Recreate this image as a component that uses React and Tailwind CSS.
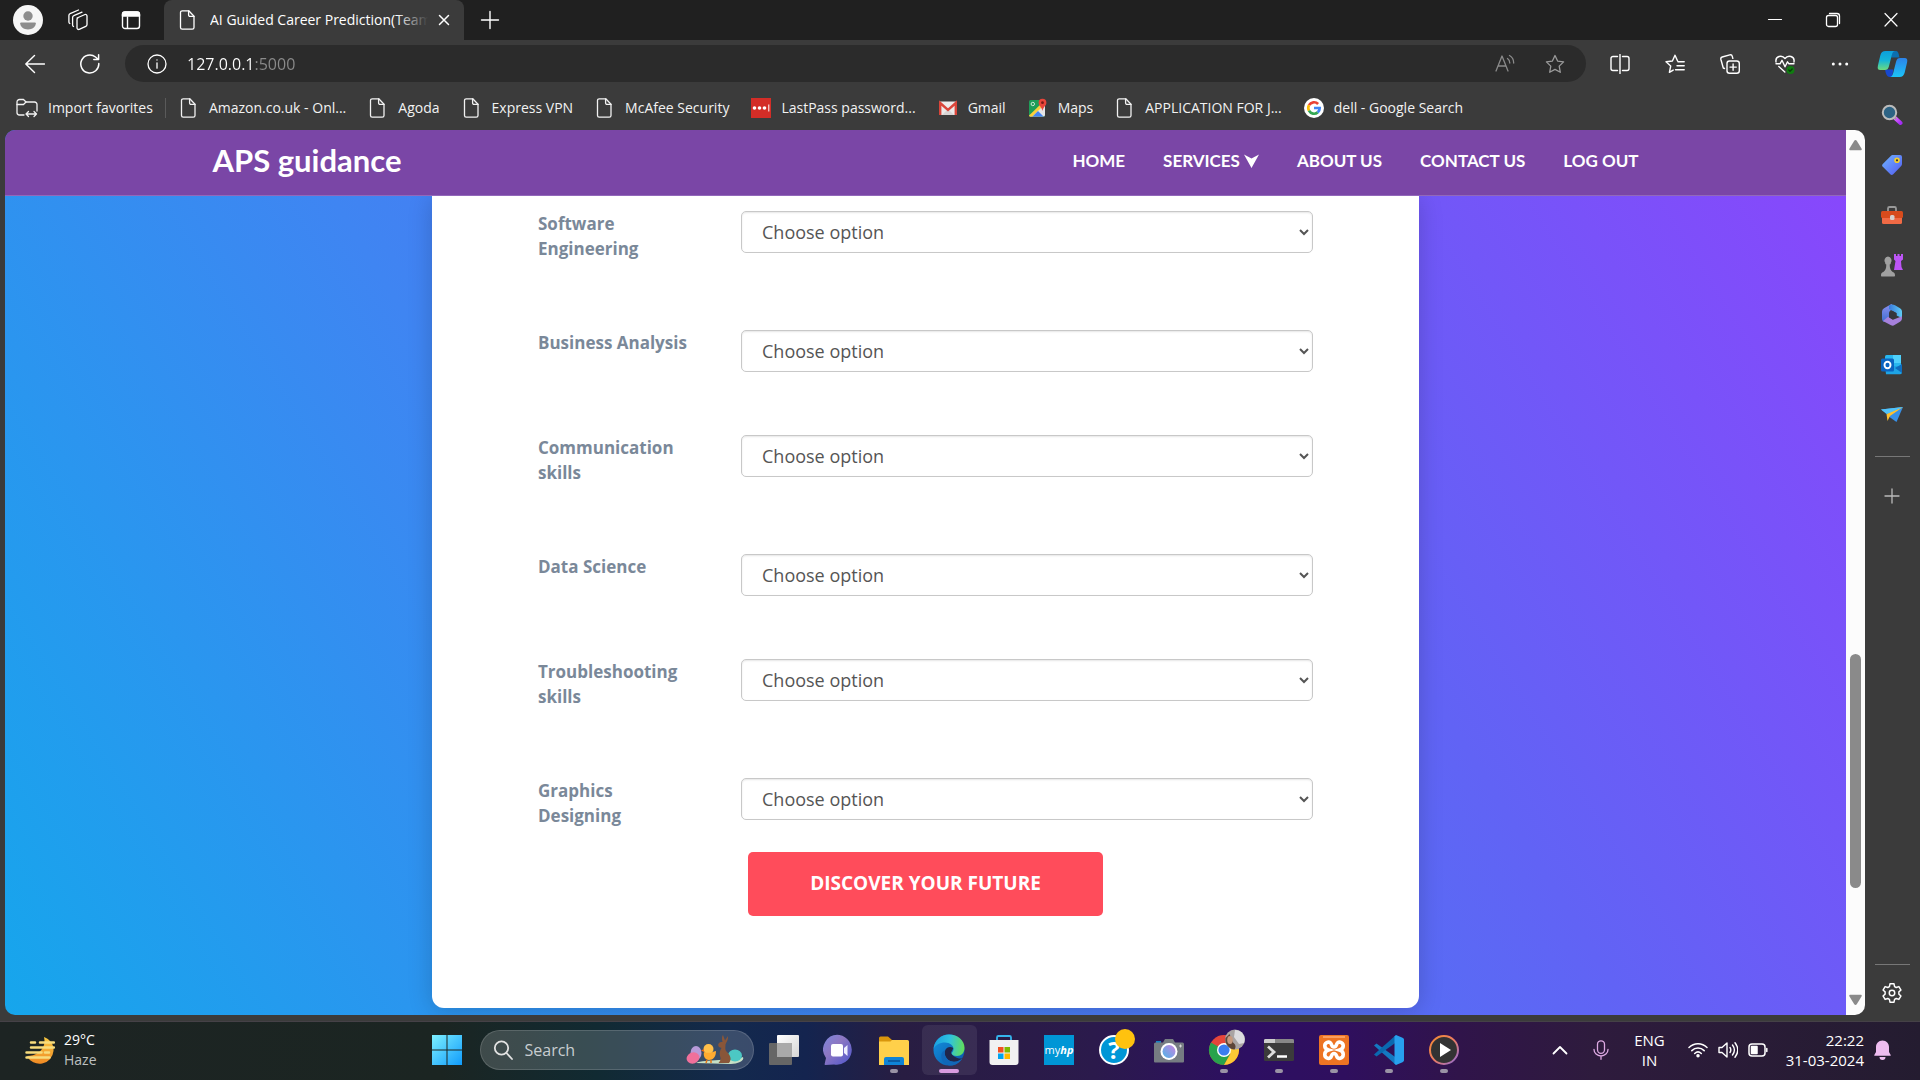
import React from "react";

const line = { fill: "none", stroke: "currentColor", strokeLinecap: "round", strokeLinejoin: "round" };

function Svg({ box = "0 0 20 20", className = "size-5", children, ...rest }) {
  return (
    <svg viewBox={box} className={`shrink-0 ${className}`} aria-hidden="true" {...rest}>
      {children}
    </svg>
  );
}

const PageIcon = () => (
  <Svg {...line} strokeWidth="1.3">
    <path d="M4 .8h6.8l5.2 5.4v11.3a1.7 1.7 0 0 1-1.7 1.7H4.2a1.7 1.7 0 0 1-1.7-1.7V2.5A1.7 1.7 0 0 1 4.2.8" />
    <path d="M10.6 1v4a1.4 1.4 0 0 0 1.4 1.4h4" />
  </Svg>
);

const ImportIcon = () => (
  <Svg box="0 0 22 20" className="h-5 w-[22px]" {...line} strokeWidth="1.3">
    <path d="M8 17H3.5A2.500 2.500 0 0 1 1 14.500V4a2.500 2.500 0 0 1 2.500-2.500h4L10 4h8.500A2.500 2.500 0 0 1 21 6.500V13" />
    <path d="M1 6.500h6.500L10 4M10 16h10.500M12.500 13.500 10 16l2.500 2.500M18 13.500l2.500 2.500-2.500 2.500" />
  </Svg>
);

const LastPassIcon = () => (
  <Svg>
    <rect width="20" height="20" fill="#d32d27" />
    <circle cx="3.500" cy="10" r="1.800" fill="#fff" />
    <circle cx="8.500" cy="10" r="1.800" fill="#fff" />
    <circle cx="13.500" cy="10" r="1.800" fill="#fff" />
    <path d="M17.800 6.500v7" stroke="#fff" strokeWidth="1" />
  </Svg>
);

const GmailIcon = () => (
  <Svg>
    <rect x="1" y="3.500" width="18" height="13.500" rx="1.500" fill="#eceaea" />
    <path d="M4 17 10 11l6 6z" fill="#d8d4d4" />
    <path d="M2.200 17V5l7.800 6.800L17.800 5v12" fill="none" stroke="#d9453a" strokeWidth="2.400" />
  </Svg>
);

const MapsIcon = () => (
  <Svg>
    <rect x="1" y="2" width="16" height="16.500" rx="1.500" fill="#1f9d58" />
    <path d="M1.500 18.500 17 4v13a1.500 1.500 0 0 1-1.500 1.500z" fill="#e6e6e6" />
    <path d="M1 17.500 14 5l2 2L4.500 18.500H2A1 1 0 0 1 1 17.500" fill="#fbd03b" />
    <path d="m4.500 18.500 5.500-5.500 5.500 5.500z" fill="#4384f3" />
    <circle cx="4.800" cy="6" r="1.700" fill="none" stroke="#cfe8d8" strokeWidth="1" />
    <path d="M14.500.800a3.900 3.900 0 0 1 3.900 3.900c0 2.900-3 3.800-3.900 8.300-.9-4.500-3.900-5.400-3.900-8.300A3.900 3.900 0 0 1 14.500.800" fill="#e8453a" />
    <circle cx="14.500" cy="4.700" r="1.400" fill="#7c1b17" />
  </Svg>
);

const GoogleIcon = () => (
  <Svg>
    <circle cx="10" cy="10" r="10" fill="#fff" />
    <g fill="none" strokeWidth="2.700">
      <path d="M5 7.200A5.700 5.700 0 0 1 14.100 6" stroke="#ea4335" />
      <path d="M5 12.700A5.700 5.700 0 0 1 5 7.200" stroke="#fbbc05" />
      <path d="M13.700 14.400A5.700 5.700 0 0 1 5 12.700" stroke="#34a853" />
      <path d="M10 10h5.700a5.700 5.700 0 0 1-2 4.400" stroke="#4285f4" />
    </g>
  </Svg>
);

const bookmarks = [
  ["Amazon.co.uk - Onl...", PageIcon],
  ["Agoda", PageIcon],
  ["Express VPN", PageIcon],
  ["McAfee Security", PageIcon],
  ["LastPass password...", LastPassIcon],
  ["Gmail", GmailIcon],
  ["Maps", MapsIcon],
  ["APPLICATION FOR J...", PageIcon],
  ["dell - Google Search", GoogleIcon],
];

function TabStrip() {
  return (
    <div className="flex h-10 items-stretch bg-[#202020] text-white">
      <div className="flex w-[164px] shrink-0 items-center gap-6 pl-[13px]">
        <button aria-label="Profile" className="size-[30px]">
          <Svg box="0 0 30 30" className="size-[30px]">
            <circle cx="15" cy="15" r="15" fill="#f6f6f6" />
            <circle cx="15" cy="11" r="4.700" fill="#8d8d8d" />
            <path d="M8 17.500h14c.5 0 .8.300.8.800 0 3.700-3.500 6.200-7.800 6.200s-7.800-2.500-7.800-6.200c0-.5.300-.8.800-.8" fill="#8d8d8d" />
          </Svg>
        </button>
        <button aria-label="Workspaces" className="mr-2">
          <Svg box="0 0 22 22" className="size-[22px]" {...line} strokeWidth="1.300">
            <path d="m10 9 8-3.500a1.500 1.500 0 0 1 2 1.400v8.600a2 2 0 0 1-1.200 1.800l-6.600 3a1.500 1.500 0 0 1-2.200-1.400v-8.500A1.600 1.600 0 0 1 10.900 9z" />
            <path d="M6.500 17.500a1.500 1.500 0 0 1-.9-1.400V8.500c0-.8.400-1.500 1.200-1.800L15 3.200M2.800 14.500a1.500 1.500 0 0 1-.9-1.400V6.500c0-.8.400-1.500 1.200-1.800L11.500 1" />
          </Svg>
        </button>
        <button aria-label="Tab actions">
          <Svg box="0 0 20 20" className="size-5" {...line} strokeWidth="1.400">
            <rect x="1.500" y="2" width="17" height="16.500" rx="2.500" />
            <path d="M1.500 6V4.500A2.500 2.500 0 0 1 4 2h12a2.500 2.500 0 0 1 2.500 2.500V6z" fill="currentColor" />
            <path d="M6.500 7v11" />
          </Svg>
        </button>
      </div>
      <div className="flex w-[300px] items-center rounded-t-lg bg-[#3b3b3b] pl-[14px] pr-3">
        <PageIcon />
        <span className="relative ml-3 min-w-0 flex-1 overflow-hidden whitespace-nowrap text-sm after:absolute after:inset-y-0 after:right-0 after:w-8 after:bg-linear-to-r after:from-transparent after:to-[#3b3b3b]">
          AI Guided Career Prediction(Team
        </span>
        <button aria-label="Close tab" className="ml-2">
          <Svg box="0 0 16 16" className="size-4" {...line} strokeWidth="1.500"><path d="m3.500 3.500 9 9m0-9-9 9" /></Svg>
        </button>
      </div>
      <button aria-label="New tab" className="ml-4">
        <Svg {...line} strokeWidth="1.400"><path d="M10 1.500v17M1.500 10h17" /></Svg>
      </button>
      <div className="ml-auto flex items-stretch">
        <button aria-label="Minimize" className="flex w-[58px] items-center justify-center"><Svg box="0 0 16 16" className="size-4" {...line} strokeWidth="1.200"><path d="M1.500 7.500h13" /></Svg></button>
        <button aria-label="Restore" className="flex w-[58px] items-center justify-center">
          <Svg box="0 0 16 16" className="size-4" {...line} strokeWidth="1.300">
            <rect x="1.500" y="3.500" width="11" height="11" rx="2" />
            <path d="M4.500 1.500h7.500a2.500 2.500 0 0 1 2.500 2.500v7.500" />
          </Svg>
        </button>
        <button aria-label="Close" className="flex w-[58px] items-center justify-center"><Svg box="0 0 16 16" className="size-4" {...line} strokeWidth="1.200"><path d="m2 1.500 12 12.500M14 1.500 2 14" /></Svg></button>
      </div>
    </div>
  );
}

const CopilotIcon = () => (
  <Svg box="0 0 32 30" className="h-[28px] w-[31px]">
    <defs>
      <linearGradient id="cpA" x1="0" y1="0" x2="0" y2="1"><stop stopColor="#0c9fdc" /><stop offset=".5" stopColor="#15b5d8" /><stop offset="1" stopColor="#6edb7c" /></linearGradient>
      <linearGradient id="cpB" x1="0" y1="0" x2="0" y2="1"><stop stopColor="#2c82e8" /><stop offset="1" stopColor="#1cc4f8" /></linearGradient>
    </defs>
    <path d="M15 1h4c3 0 3.500 2 4.500 7l-9 0z" fill="#0c6fae" />
    <path d="M8 21h9l-1.500 8H13c-3 0-4-3-5-8" fill="#1748cf" />
    <path d="M8.500 1H19c-2 0-3 1.500-3.800 4.500l-3 12c-.8 3-2 4-4.400 4H3c-2.700 0-3.300-2-2.600-5L3 5.500C3.900 2.500 5.500 1 8.500 1" fill="url(#cpA)" />
    <path d="M23.500 29H13c2 0 3-1.500 3.800-4.500l3-12c.8-3 2-4 4.400-4H29c2.700 0 3.300 2 2.600 5L29 24.500c-.9 3-2.500 4.500-5.500 4.500" fill="url(#cpB)" />
  </Svg>
);

const STAR = "m10 1.500 2.600 5.600 6 .8-4.400 4.200 1.100 6.200L10 15.400l-5.300 2.900 1.100-6.200L1.400 7.900l6-.8z";

function Toolbar() {
  return (
    <div className="flex h-[47px] items-center text-white">
      <button aria-label="Back" className="ml-[25px]"><Svg {...line} strokeWidth="1.400"><path d="M19.500 10H.800M9.500 1.500.800 10l8.700 8.500" /></Svg></button>
      <button aria-label="Refresh" className="ml-[35px]"><Svg {...line} strokeWidth="1.500"><path d="M18.800 9.500A9 9 0 1 1 15.500 3L18.500 5.500M18.600.800v4.800h-4.800" /></Svg></button>
      <div className="ml-[25px] flex h-[37px] flex-1 items-center rounded-full bg-[#2b2b2b] pl-[22px] pr-[21px]">
        <button aria-label="Site information"><Svg {...line} strokeWidth="1.300"><circle cx="10" cy="10" r="9" /><path d="M10 8.800v5.400M10 5.800v.2" /></Svg></button>
        <input aria-label="Address" defaultValue="127.0.0.1:5000" className="ml-5 min-w-0 flex-1 bg-[linear-gradient(90deg,#ffffff_66px,#8b8b8b_66px)] bg-clip-text text-base text-transparent outline-none" />
        <button aria-label="Read aloud" className="text-[#8b8b8b]"><Svg {...line} strokeWidth="1.300"><path d="m1 17 6-15 6 15M3 12h8M12.500 4.500c1.500 1 2.300 2.500 2.300 4.500M14.500 1.500c2.700 1.500 4.200 4 4.200 7.500" /></Svg></button>
        <button aria-label="Add favorite" className="ml-[30px] text-[#9a9a9a]"><Svg {...line} strokeWidth="1.300"><path d={STAR} /></Svg></button>
      </div>
      <div className="ml-[24px] flex items-center gap-[35px]">
        <button aria-label="Split screen"><Svg {...line} strokeWidth="1.400"><path d="M10 .500v19M7.500 2.500H3A2 2 0 0 0 1 4.500v10a2 2 0 0 0 2 2h4.500M12.500 2.500H17a2 2 0 0 1 2 2v10a2 2 0 0 1-2 2h-4.500" /></Svg></button>
        <button aria-label="Favorites"><Svg {...line} strokeWidth="1.400"><path d="M12.600 7 10 1.200 7.400 7l-6.400.700 4.700 4.300-1.300 6.300 3.800-2.200M13 7.700h6.200M12 11.800h7.200M10.500 15.800h8.700" /></Svg></button>
        <button aria-label="Collections"><Svg {...line} strokeWidth="1.400"><rect x="7" y="7" width="12.300" height="12.300" rx="2.500" /><path d="M13.100 10v6.300M10 13.100h6.300M4.500 14.500l-1.200-.5L.900 5.500c-.3-1.200.2-2.200 1.300-2.500L9.800.900C11 .6 12 1.100 12.300 2.300l.5 2" /></Svg></button>
        <button aria-label="Browser essentials"><Svg {...line} strokeWidth="1.400"><path d="M1 8C0 2 7 .500 10 4.500c3-4 10-2.500 9 3.500M1 9.800h4l2-3.500 3 6.500 2.500-5 1.500 2h5M3.800 12.500 9.800 18" /><circle cx="15.500" cy="16" r="4" fill="#107c10" stroke="none" /><path d="m13.800 16 1.200 1.200 2.200-2.200" stroke="#0a3d0a" /></Svg></button>
        <button aria-label="Settings and more"><Svg fill="currentColor"><circle cx="3.300" cy="10" r="1.500" /><circle cx="10" cy="10" r="1.500" /><circle cx="16.700" cy="10" r="1.500" /></Svg></button>
      </div>
      <button aria-label="Copilot" className="ml-[27px] mr-3"><CopilotIcon /></button>
    </div>
  );
}

function Bookmarks() {
  return (
    <nav aria-label="Favorites bar" className="flex h-[43px] items-center pb-0.5 pl-4 text-sm text-[#f2f2f2]">
      <button className="flex items-center gap-2.5"><ImportIcon />Import favorites</button>
      <span className="ml-3 h-5 w-px bg-[#5a5a5a]" />
      <div className="ml-[13px] flex items-center gap-[22px]">
        {bookmarks.map(([name, Icon]) => (
          <a key={name} href="#" className="flex items-center gap-2.5 whitespace-nowrap"><Icon />{name}</a>
        ))}
      </div>
    </nav>
  );
}

function Scrollbar() {
  return (
    <div className="flex w-[19px] shrink-0 flex-col items-center bg-[#fcfcfc] py-2.5 text-[#8a8a8a]">
      <Svg box="0 0 13 11" className="h-[11px] w-[13px]" fill="currentColor"><path d="M6.500 0c.6 0 1 .3 1.400.9l4.600 7.500c.6 1.100.2 1.900-1 1.900h-10c-1.200 0-1.600-.8-1-1.900L5.100.9C5.500.3 5.900 0 6.500 0" /></Svg>
      <div className="flex-[503]" />
      <div className="w-[11px] flex-[234] rounded-full bg-[#8a8a8a]" />
      <div className="flex-[106]" />
      <Svg box="0 0 13 11" className="h-[11px] w-[13px] rotate-180" fill="currentColor"><path d="M6.500 0c.6 0 1 .3 1.400.9l4.600 7.500c.6 1.100.2 1.900-1 1.900h-10c-1.200 0-1.600-.8-1-1.900L5.100.9C5.500.3 5.900 0 6.500 0" /></Svg>
    </div>
  );
}

const skills = ["Software Engineering", "Business Analysis", "Communication skills", "Data Science", "Troubleshooting skills", "Graphics Designing"];

function SitePage() {
  return (
    <div className="flex min-w-0 flex-1 flex-col bg-[linear-gradient(58deg,#16a6ec_0%,#3f85f2_35%,#6163f5_68%,#8a46fc_100%)]">
      <header className="relative border-b border-[#9268ba] bg-[#7a46a6] font-['Lato',sans-serif] font-bold text-white">
        <div className="mx-auto flex h-[65px] w-full max-w-[1426px] items-center justify-between pb-1">
          <a href="#" className="text-[31px]">APS guidance</a>
          <nav className="flex items-center gap-[38px] text-[17px]">
            <a href="#">HOME</a>
            <a href="#" className="flex items-center gap-1">SERVICES
              <Svg box="0 0 15 14" className="h-3.5 w-[15px]" fill="currentColor"><path d="M0 .500 7.500 4.500 15 .500 7.500 14z" /></Svg>
            </a>
            <a href="#">ABOUT US</a>
            <a href="#">CONTACT US</a>
            <a href="#">LOG OUT</a>
          </nav>
        </div>
      </header>
      <main className="mx-auto mb-[7px] w-full max-w-[987px] flex-1 rounded-b-xl bg-white px-[106px] pb-[91px] pt-[15px] font-['Open_Sans',sans-serif] text-lg shadow-[0_3px_25px_rgba(0,0,0,0.18)]">
        <form onSubmit={(e) => e.preventDefault()}>
          <div className="flex flex-col gap-[63px]">
            {skills.map((skill, i) => (
              <div key={skill} className="flex items-start">
                <div className="w-[203px] shrink-0 pb-1.5 pr-12">
                  <label htmlFor={`skill-${i}`} className="block text-[17px] leading-[25px] font-bold text-[#7a8899]">{skill}</label>
                </div>
                <select id={`skill-${i}`} defaultValue="" className="h-[42px] min-w-0 flex-1 rounded-[5px] border border-[#c8c8c8] bg-white pl-4 pr-0.5 text-[#555555] shadow-[inset_0_1px_2px_rgba(0,0,0,0.1)]">
                  <option value="">Choose option</option>
                  <option>Not Interested</option>
                  <option>Beginner</option>
                  <option>Intermediate</option>
                  <option>Professional</option>
                </select>
              </div>
            ))}
          </div>
          <div className="mt-[18px] flex justify-center">
            <button type="submit" className="h-16 w-[355px] rounded-[5px] bg-[#ff4c5b] text-[19px] font-bold text-white">DISCOVER YOUR FUTURE</button>
          </div>
        </form>
      </main>
    </div>
  );
}

function Sidebar() {
  const cell = "flex h-[50px] w-full items-center justify-center";
  return (
    <aside className="flex w-[55px] shrink-0 flex-col items-center pr-px pt-[3px] text-white">
      <button aria-label="Search" className={cell}>
        <Svg box="0 0 22 22" className="size-[22px]"><defs><linearGradient id="hd" x1="0" y1="0" x2="1" y2="1"><stop stopColor="#e26bff" /><stop offset="1" stopColor="#a42cf5" /></linearGradient></defs>
          <path d="m14 14 5.500 5" stroke="url(#hd)" strokeWidth="4" strokeLinecap="round" /><path d="m12 12 3 3" stroke="#999" strokeWidth="2" /><circle cx="8.500" cy="8.500" r="6.700" fill="#2d6384" stroke="#bbb" strokeWidth="2" /></Svg>
      </button>
      <button aria-label="Shopping" className={cell}>
        <Svg box="0 0 22 22" className="size-[22px]"><defs><linearGradient id="tg" x1="0" y1="0" x2="1" y2="1"><stop stopColor="#6fb6ff" /><stop offset="1" stopColor="#5359f0" /></linearGradient></defs>
          <path d="M11.500 1H19a2 2 0 0 1 2 2v7c0 .800-.3 1.500-.8 2l-8 8.300c-.9.900-2 .900-2.900 0l-7.500-7.500c-.9-.9-.9-2 0-2.900L10 1.800c.4-.5.900-.8 1.500-.8" fill="url(#tg)" /><circle cx="16" cy="6.300" r="2.800" fill="#f3ce2e" /><circle cx="16" cy="6.300" r="1.100" fill="#333" /></Svg>
      </button>
      <button aria-label="Tools" className={cell}>
        <Svg box="0 0 22 20" className="h-5 w-[22px]"><path d="M7 6V3.500A1.500 1.500 0 0 1 8.500 2h5A1.500 1.500 0 0 1 15 3.500V6" fill="none" stroke="#999" strokeWidth="1.800" /><rect x="1" y="8" width="20" height="11" rx="1.500" fill="#f06a45" /><rect y="6" width="22" height="7" rx="1.500" fill="#d74b1c" /><rect x="9" y="10" width="4.500" height="5" rx="1.500" fill="#d5d0ce" /></Svg>
      </button>
      <button aria-label="Games" className={cell}>
        <Svg box="0 0 22 24" className="h-6 w-[22px]"><path d="M13 1h2v2h1.500V1h2v2H20V1h2v5.500l-2 1.500.5 6 1.500 3h-9l1.500-9L13 6.500z" fill="#bd55f7" /><path d="M7 3.500A4 4 0 0 1 9.700 10v1l-1 .5c0 4 1 6 3 7.500 1.800.8 2.300 1.500 2.300 3.500 0 .6-.4 1-1 1H1c-.6 0-1-.4-1-1 0-2 .5-2.700 2.300-3.500 2-1.500 3-3.500 3-7.500l-1-.5v-1A4 4 0 0 1 7 3.500" fill="#a0a0a0" /></Svg>
      </button>
      <button aria-label="Microsoft 365" className={cell}>
        <Svg box="0 0 22 22" className="size-[22px]"><defs><linearGradient id="mA" x1="0" y1="0" x2="0" y2="1"><stop stopColor="#8c8ff0" /><stop offset="1" stopColor="#3e6fd0" /></linearGradient><linearGradient id="mB"><stop stopColor="#3878db" /><stop offset="1" stopColor="#5fcdf5" /></linearGradient></defs>
          <path d="M10.500 0 3 4.200A4 4 0 0 0 1 7.700v7c0 1.500.800 2.600 2 3.300l5-3V9c0-1.500 2-3.300 5-5z" fill="url(#mA)" /><path d="M8 1.500C10 .300 12 .200 14 1.300l5 3c1.300.8 2 2 2 3.500V14l-5.500-2.500V9L8 5z" fill="url(#mB)" /><path d="m2 17 8 4.200c1.300.700 2.500.500 3.500-.1l5.500-3.300c1.300-.8 2-2 2-3.500v-2l-9 3.500-5-3z" fill="#a681dc" /><path d="m11.500 7 4 2.300v4l-4 2.300-3.500-2.300v-4z" fill="#35363d" /></Svg>
      </button>
      <button aria-label="Outlook" className={cell}>
        <Svg box="0 0 22 22" className="size-[22px]"><rect x="4" y="1" width="16" height="12" rx="1.500" fill="#28b7ef" /><path d="M12 1h8v8h-8z" fill="#4fd0fa" /><path d="M4 12h17v6.500a1.800 1.800 0 0 1-1.800 1.800H5z" fill="#1ea4e6" /><path d="m14 14 7-4v9z" fill="#0f6cbd" /><rect y="4.500" width="13" height="13" rx="1.500" fill="#0b64c0" /><ellipse cx="6.500" cy="11" rx="3" ry="3.300" fill="none" stroke="#fff" strokeWidth="1.900" /></Svg>
      </button>
      <button aria-label="Drop" className={cell}>
        <Svg box="0 0 22 18" className="h-[18px] w-[22px]"><path d="M0 3.500 22 1l-12 9z" fill="#45b4f4" /><path d="M22 1 15.500 16 7 10z" fill="#3790e8" /><path d="M22 1 5.500 8 6.500 15 9 10z" fill="#ffc02d" /><path d="m0 3.500 22-2.500L5.500 8z" fill="#50c2fa" /></Svg>
      </button>
      <span className="mt-4 h-px w-[35px] bg-[#777777]" />
      <button aria-label="Customize" className="mt-[29px] text-[#bbbbbb]"><Svg {...line} strokeWidth="1.300"><path d="M10 3v14M3 10h14" /></Svg></button>
      <span className="mt-auto h-px w-[35px] bg-[#777777]" />
      <button aria-label="Settings" className="mb-[17px] mt-[17px]">
        <Svg box="0 0 24 24" className="size-[22px]" {...line} strokeWidth="1.600"><path d="m9.800 2-.6 3-1.800 1L4.500 5 2.200 8.800l2.300 2v2.400l-2.300 2L4.500 19l2.900-1 1.800 1 .6 3h4.400l.6-3 1.800-1 2.900 1 2.300-3.800-2.300-2v-2.400l2.300-2L19.500 5l-2.900 1-1.800-1-.6-3z" /><circle cx="12" cy="12" r="3" /></Svg>
      </button>
    </aside>
  );
}

const EdgeIcon = () => (
  <Svg box="0 0 32 32" className="size-8"><defs>
    <linearGradient id="eA" x1="0" y1=".4" x2="1" y2=".5"><stop stopColor="#1a9fe0" /><stop offset=".5" stopColor="#2fc2df" /><stop offset="1" stopColor="#63de58" /></linearGradient>
    <linearGradient id="eB" x1="0" y1="0" x2="1" y2="1"><stop stopColor="#1493df" /><stop offset="1" stopColor="#0a55a8" /></linearGradient></defs>
    <circle cx="16" cy="16" r="15.500" fill="url(#eB)" />
    <path d="M.500 15C1.500 6 8 .500 16 .500c9 0 15.500 6 15.500 13.500 0 5-3.500 8-7.500 8-3.500 0-5.500-1.500-5.500-2.500s2-1.500 2-4.500c0-3.500-3.500-6.500-8.500-6.500-5.500 0-9.500 2.500-11.500 6.500" fill="url(#eA)" />
    <path d="M20.300 14c-3-2-6.500-1-8 2-2 4.500 1 10.500 7 11.500 4 .7 7-.5 10-3-3 .3-6-.5-8-2-3-2-4-4-2.300-5.500z" fill="#20264a" />
    <path d="M12.300 16c-2 4.500 1 10.500 7 11.500 4 .7 7-.5 10-3-2.500 4.500-7.500 7.500-13 7-5-.8-8-5-8-9.500 0-3 1.500-5 4-6" fill="#1167b8" />
  </Svg>
);

const taskApps = [
  ["Task View", false, <Svg key="i" box="0 0 32 32" className="size-8"><defs><linearGradient id="tv" x1="0" y1="0" x2="1" y2="1"><stop stopColor="#fff" /><stop offset="1" stopColor="#d6d6d6" /></linearGradient></defs><rect x="9" y="1" width="22" height="22" rx="1" fill="url(#tv)" /><rect x="1" y="9" width="23" height="22" rx="1" fill="#666" /><path d="M9 9h15v14H9z" fill="#a9a9a9" /></Svg>],
  ["Chat", false, <Svg key="i" box="0 0 32 32" className="size-8"><defs><linearGradient id="ch" x1="0" y1="0" x2="1" y2="1"><stop stopColor="#7c86dd" /><stop offset=".4" stopColor="#8d77c2" /><stop offset="1" stopColor="#4d55cc" /></linearGradient></defs><path d="M16.500 1A14.500 14.500 0 1 1 11 30.500L2.500 31c-.8 0-1.200-.5-.8-1.200L3 24A14.500 14.500 0 0 1 16.500 1" fill="url(#ch)" /><rect x="8" y="10" width="12" height="12.500" rx="2" fill="#fff" /><path d="m21 14 3.500-3v11L21 19z" fill="#eef" /></Svg>],
  ["File Explorer", true, <Svg key="i" box="0 0 32 32" className="size-8"><path d="M1 4a1.500 1.500 0 0 1 1.500-1.500H10L14 6v6H1z" fill="#d9960c" /><path d="M1 7.500h11.500L14 6h15.500A1.500 1.500 0 0 1 31 7.500V31H1z" fill="#ffd04a" /><path d="M6 31v-6a2 2 0 0 1 2-2h16a2 2 0 0 1 2 2v6z" fill="#0f83d6" /><path d="M10 27h12" stroke="#0b4f92" strokeWidth="1.500" /></Svg>],
  ["Microsoft Edge", "active", <EdgeIcon key="i" />],
  ["Microsoft Store", false, <Svg key="i" box="0 0 32 32" className="size-8"><path d="M9 7V3.500A1.500 1.500 0 0 1 10.500 2h11A1.500 1.500 0 0 1 23 3.500V7" fill="none" stroke="#35b5ee" strokeWidth="1.800" /><path d="M1.500 6h29v22a3 3 0 0 1-3 3h-23a3 3 0 0 1-3-3z" fill="#f1f1f1" /><path d="M10 13h5.500v5.500H10z" fill="#f25022" /><path d="M16.500 13H22v5.500h-5.500z" fill="#7fba00" /><path d="M10 19.500h5.500V25H10z" fill="#00a4ef" /><path d="M16.500 19.500H22V25h-5.500z" fill="#ffb900" /></Svg>],
  ["myHP", false, <span key="i" className="flex size-[30px] items-center justify-center bg-[#0096d6] text-[11px] text-white">my<i className="font-bold">hp</i></span>],
  ["HP Support", false, <span key="i" className="relative flex size-[30px] items-center justify-center rounded-full border-2 border-white bg-[#0096d6] text-2xl font-bold text-white">?<span className="absolute -right-2 -top-2 size-5 rounded-full bg-[#ffc20e]" /></span>],
  ["Camera", false, <Svg key="i" box="0 0 32 32" className="size-8"><defs><linearGradient id="cm" x1="1" y1="0" x2="0" y2="1"><stop stopColor="#c882e0" /><stop offset="1" stopColor="#4db5e8" /></linearGradient></defs><path d="M3 7h5v3H3z" fill="#1681c2" /><path d="M10 8.500 12 5h8l2 3.500h7.500A1.500 1.500 0 0 1 31 10v17.500a1 1 0 0 1-1 1H2a1 1 0 0 1-1-1V10a1.500 1.500 0 0 1 1.500-1.500z" fill="#767c82" /><circle cx="16" cy="17.500" r="8.500" fill="#fff" /><circle cx="16" cy="17.500" r="6.500" fill="url(#cm)" /><path d="M27.500 10.500v3M26 12h3" stroke="#ddd" strokeWidth=".9" /></Svg>],
  ["Google Chrome", true, <Svg key="i" box="0 0 32 32" className="size-8 overflow-visible"><circle cx="16" cy="16" r="15" fill="#e5453a" /><path d="M16 16 3 8.500A15 15 0 0 0 16 31l6.500-11.300z" fill="#28a34c" /><path d="M16 9h13.300A15 15 0 0 1 16 31l6.300-11z" fill="#fcc934" /><circle cx="16" cy="16" r="7" fill="#fff" /><circle cx="16" cy="16" r="5.600" fill="#3b7df0" /><circle cx="27" cy="5.500" r="10" fill="#a9a4a3" /><path d="M17.500 4a10 10 0 0 0 9 11.500c2-3 1-5-1.500-7L21.500 0z" fill="#5d4639" /><ellipse cx="22" cy="6" rx="2.800" ry="4" fill="#c69a7f" /><path d="M27-4a9.500 9.500 0 0 1 9 13l-5 1-5-7z" fill="#dcdcdf" /></Svg>],
  ["Terminal", true, <Svg key="i" box="0 0 32 32" className="size-8"><rect x="1" y="5" width="30" height="22" rx="1.500" fill="#3b3b3b" /><path d="M1 6.500A1.500 1.500 0 0 1 2.500 5h27A1.500 1.500 0 0 1 31 6.500V9H1z" fill="#888" /><path d="M1 6.500A1.500 1.500 0 0 1 2.500 5H12v4H1z" fill="#ccc" /><path d="m5 12.500 6 5.500-6 5.500" fill="none" stroke="#ddd" strokeWidth="2.800" /><path d="M14 22.500h10" stroke="#fff" strokeWidth="2.500" /></Svg>],
  ["XAMPP", true, <Svg key="i" box="0 0 32 32" className="size-8"><rect x="1" y="1" width="30" height="30" rx="2" fill="#ed7423" /><path d="M5 3h22" stroke="#ffad72" strokeWidth="1.500" /><path d="M10.500 8c-5 1-5 6.500 0 8-5 1.500-5 7.500 0 8.500 4 0 2-5 5.500-5s1.500 5 5.500 5c5-1 5-7 0-8.500 5-1.500 5-7 0-8-4 0-2 5-5.500 5s-1.500-5-5.500-5z" fill="none" stroke="#fff" strokeWidth="3.600" /></Svg>],
  ["Visual Studio Code", true, <Svg key="i" box="0 0 32 32" className="size-8"><path d="m1 11.500 2.500-2L25 25l-2 6z" fill="#1479c2" /><path d="m1 20.500 2.500 2L25 7l-2-6z" fill="#0a69b0" /><path d="m23 1 6.500 2.800c1 .5 1.500 1 1.500 2.200v20c0 1.200-.5 1.700-1.500 2.200L23 31l-1.500-1.500v-27z" fill="#28a0ee" /></Svg>],
  ["Media Player", true, <Svg key="i" box="0 0 32 32" className="size-8"><defs><linearGradient id="mp" x1="0" y1="0" x2="1" y2="1"><stop stopColor="#f28c32" /><stop offset=".5" stopColor="#ec7c63" /><stop offset="1" stopColor="#8b6bd8" /></linearGradient></defs><circle cx="16" cy="16" r="14" fill="#333" stroke="url(#mp)" strokeWidth="2" /><path d="m12 9 11 7-11 7z" fill="#fff" /></Svg>],
];

function Taskbar() {
  return (
    <footer className="grid h-[59px] grid-cols-[1fr_auto_1fr] items-stretch border-t border-[#454147] bg-[linear-gradient(90deg,#1d2423_0%,#1b2522_23%,#112a32_31%,#13294d_38%,#14244f_42%,#281d42_47%,#2b1a4c_57%,#2d0f62_65%,#2f0f5e_70%,#30144a_76%,#2e1b3d_83%,#241c30_100%)] pb-0.5 pr-[29px] text-white">
      <button className="flex items-center gap-[9px] justify-self-start pl-[25px] text-left text-sm leading-5">
        <Svg box="0 0 30 30" className="size-[30px]"><defs><linearGradient id="mn" x1="0" y1="0" x2="0" y2="1"><stop stopColor="#f7c842" /><stop offset="1" stopColor="#f08a24" /></linearGradient></defs><path d="M19 2c6 2.500 10 7 9.500 14A14 14 0 0 1 2 21c9 0 20-6 17-19" fill="url(#mn)" /><path d="M6 7.500h4M15 7.500h14M6 12.500h23M1.500 17.500h15M20 17.500h4M1.500 22.500h23" stroke="#f7dc7c" strokeWidth="2.500" strokeLinecap="round" /></Svg>
        <span className="flex flex-col"><span>29°C</span><span className="text-[#bdc0c0]">Haze</span></span>
      </button>
      <div className="flex items-center">
        <button aria-label="Start" className="flex w-[60px] justify-center pr-[5px]">
          <Svg box="0 0 30 30" className="size-[30px]"><defs><linearGradient id="wn" x1="0" y1="0" x2="1" y2="1"><stop stopColor="#7df0ff" /><stop offset="1" stopColor="#109bfb" /></linearGradient></defs><path d="M0 0h14.500v14.500H0zM15.500 0H30v14.500H15.500zM0 15.500h14.500V30H0zM15.500 15.500H30V30H15.500z" fill="url(#wn)" /></Svg>
        </button>
        <label className="flex h-10 w-[274px] items-center rounded-full border border-white/15 bg-white/17 pl-3 pr-2">
          <Svg {...line} stroke="#e2e2e2" strokeWidth="1.800"><circle cx="8.500" cy="8" r="6.700" /><path d="m13.500 13 5.500 6" /></Svg>
          <input aria-label="Search" placeholder="Search" className="ml-3 min-w-0 flex-1 bg-transparent text-base outline-none placeholder:text-[#c8cdd0]" />
          <Svg box="0 0 60 30" className="h-[30px] w-[60px]">
            <path d="M11 28c8-4 38-2 47-6 2 4-6 7-12 7z" fill="#c7e0c5" />
            <ellipse cx="11" cy="18" rx="5.500" ry="7" fill="#b79ad8" /><ellipse cx="8" cy="23" rx="6.500" ry="5.500" transform="rotate(-20 8 23)" fill="#f0709b" />
            <circle cx="23.500" cy="14" r="5" fill="#ffc04a" /><path d="M19 17c5 2 8 0 12-1 0 6-3 9-7 9s-6-4-5-8" fill="#ffab30" /><path d="m19 14-3 1.500 3 1.500z" fill="#ee6c14" /><path d="m22 25-1 3m5-3v3" stroke="#e57513" strokeWidth="1.500" />
            <ellipse cx="50" cy="20.500" rx="7" ry="6" fill="#4cc8c4" />
            <path d="M34 12c-2-3 0-5 3.500-5C36.500 4 37 1 38 0l2 5.500L43 1c.5 3.500-1.500 6-2.500 8.500 0 4-1 5 2 8 3.500 4 4 7 1.500 10.500H33.500c2.500-3 2.500-4 1.500-7-.8-3 0-6 1.500-8z" fill="#895639" />
          </Svg>
        </label>
        <div className="ml-[3px] flex">
          {taskApps.map(([name, state, icon]) => (
            <button key={name} aria-label={name} className={`relative flex h-[50px] w-[55px] items-center justify-center ${state === "active" ? "rounded-md bg-white/8" : ""}`}>
              {icon}
              {state && <span className={`absolute bottom-0.5 h-1 rounded-full ${state === "active" ? "w-5 bg-[#d99be0]" : "w-2 bg-[#9a93a5]"}`} />}
            </button>
          ))}
        </div>
      </div>
      <div className="flex items-center justify-self-end">
        <button aria-label="Hidden icons" className="mr-[25px]"><Svg box="0 0 16 16" className="size-4" {...line} strokeWidth="1.800"><path d="m1.500 11.500 6.500-6.500 6.500 6.500" /></Svg></button>
        <button aria-label="Microphone" className="mr-[25px] text-[#dda9e2]"><Svg box="0 0 16 20" className="h-5 w-4" {...line} strokeWidth="1.300"><rect x="4.500" y=".8" width="7" height="12.500" rx="3.500" /><path d="M1 9.500a7 6.500 0 0 0 14 0M8 16v3.300" /></Svg></button>
        <button className="mr-[23px] flex flex-col items-center text-[15px] leading-5"><span>ENG</span><span>IN</span></button>
        <button aria-label="Network, volume and battery" className="mr-[18px] flex gap-2.5">
          <Svg {...line} strokeWidth="1.500"><path d="M1 7.500c5-5 13-5 18 0M3.800 10.600c3.500-3.500 8.900-3.500 12.400 0M6.700 13.500c2-2 4.600-2 6.600 0" /><circle cx="10" cy="15.800" r="1" fill="currentColor" /></Svg>
          <Svg {...line} strokeWidth="1.400"><path d="M1 7.500h3l5-4.500v14l-5-4.500H1zM12 7.500c1 1.500 1 3.500 0 5M14.500 5c2.300 3 2.300 7 0 10M17 2.800c3.500 4.500 3.500 9.900 0 14.400" /></Svg>
          <Svg {...line} strokeWidth="1.500"><rect x="1" y="4" width="16" height="12" rx="3" /><path d="M3.500 6.500H9v7H3.500zM18.800 8.500v3" fill="currentColor" /></Svg>
        </button>
        <button className="flex flex-col items-end text-[15px] leading-5"><span>22:22</span><span>31-03-2024</span></button>
        <button aria-label="Notifications" className="ml-2.5"><Svg box="0 0 17 20" className="h-5 w-[17px]" fill="#eebcf0"><path d="M8.500.500c4 0 6.500 3 6.500 6.500v5l1.700 3v.8H.300V15L2 12V7C2 3.500 4.500.500 8.500.500M5.500 17h6a3 3 0 0 1-6 0" /></Svg></button>
      </div>
    </footer>
  );
}

export default function App() {
  return (
    <div className="flex min-h-screen flex-col bg-[#3b3b3b] font-['Open_Sans',sans-serif]">
      <TabStrip />
      <Toolbar />
      <div className="flex flex-1">
        <div className="flex min-w-0 flex-1 flex-col">
          <Bookmarks />
          <div className="mb-1.5 ml-[5px] flex flex-1 overflow-hidden rounded-[10px]">
            <SitePage />
            <Scrollbar />
          </div>
        </div>
        <Sidebar />
      </div>
      <Taskbar />
    </div>
  );
}
